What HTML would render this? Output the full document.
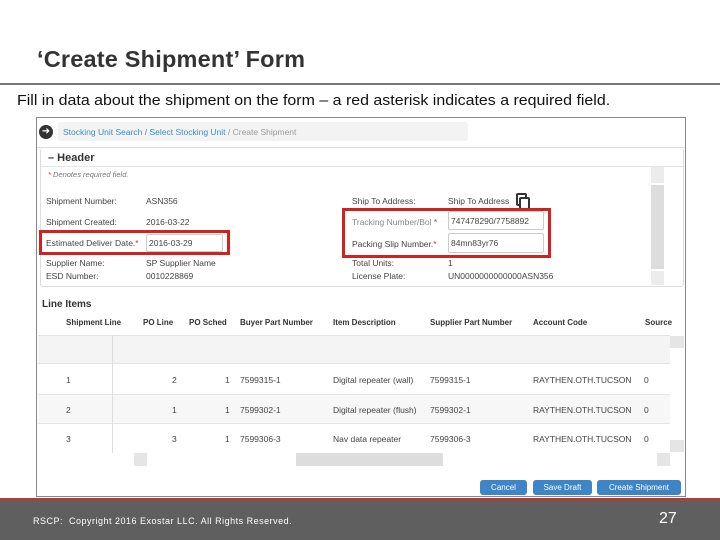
<!DOCTYPE html>
<html><head><meta charset="utf-8"><style>
*{margin:0;padding:0;box-sizing:border-box}
body{width:720px;height:540px;background:#fff;position:relative;overflow:hidden;font-family:"Liberation Sans",Arial,sans-serif}
.a{position:absolute;white-space:nowrap}
.s{font-size:8.5px;color:#444}
.h{font-size:8px;color:#333;font-weight:bold}
.btn{position:absolute;top:480px;height:15px;background:#3d85c6;color:#fff;font-size:8px;text-align:center;line-height:15px;border-radius:3px}
.g{position:absolute;background:#ddd}
</style></head><body>
<div class="a" style="left:37px;top:46px;font-size:23.5px;font-weight:bold;color:#333;letter-spacing:0.2px">‘Create Shipment’ Form</div>
<div class="a" style="left:0;top:83px;width:720px;height:2px;background:#777"></div>
<div class="a" style="left:17px;top:93px;font-size:14.5px;color:#111;transform:scaleX(1.1);transform-origin:left">Fill in data about the shipment on the form – a red asterisk indicates a required field.</div>

<div class="a" style="left:36px;top:117px;width:650px;height:380px;border:1px solid #888"></div>
<div class="a" style="left:58px;top:122px;width:410px;height:19px;background:#f3f3f3;border-radius:3px"></div>
<div class="a" style="left:39px;top:125px;width:14px;height:14px;border-radius:50%;background:#333;color:#fff;font-size:10px;line-height:14px;text-align:center">➜</div>
<div class="a" style="left:63px;top:127px;font-size:8.5px;color:#3a8fc0">Stocking Unit Search / Select Stocking Unit <span style="color:#999">/ Create Shipment</span></div>
<div class="a" style="left:37px;top:147px;width:648px;height:1px;background:#ddd"></div>
<div class="a" style="left:40px;top:148px;width:644px;height:139px;border:1px solid #ddd;border-top:none;border-radius:3px"></div>
<div class="a" style="left:48px;top:152px;font-size:11px;font-weight:bold;color:#333">– Header</div>
<div class="a" style="left:41px;top:166px;width:642px;height:1px;background:#e5e5e5"></div>
<div class="a" style="left:48px;top:170px;font-size:7.5px;font-style:italic;color:#777"><span style="color:#c33">*</span> Denotes required field.</div>

<div class="a s" style="left:46px;top:196px">Shipment Number:</div><div class="a s" style="left:146px;top:196px">ASN356</div>
<div class="a s" style="left:46px;top:217px">Shipment Created:</div><div class="a s" style="left:146px;top:217px">2016-03-22</div>
<div class="a s" style="left:46px;top:238px">Estimated Deliver Date.<span style="color:#c33">*</span></div>
<div class="a" style="left:146px;top:234px;width:77px;height:18px;border:1px solid #ccc;border-radius:2px;font-size:8.5px;color:#444;padding:3px 2px">2016-03-29</div>
<div class="a s" style="left:46px;top:258px">Supplier Name:</div><div class="a s" style="left:146px;top:258px">SP Supplier Name</div>
<div class="a s" style="left:46px;top:271px">ESD Number:</div><div class="a s" style="left:146px;top:271px">0010228869</div>

<div class="a s" style="left:352px;top:196px">Ship To Address:</div><div class="a s" style="left:448px;top:196px">Ship To Address</div>
<div class="a" style="left:516px;top:193px;width:11px;height:13px;border:2px solid #333;border-radius:2px"></div>
<div class="a" style="left:519px;top:197px;width:11px;height:13px;border:2px solid #333;border-radius:2px;background:#fff"></div>
<div class="a s" style="left:352px;top:217px;color:#888">Tracking Number/Bol <span style="color:#c33">*</span></div>
<div class="a" style="left:448px;top:211px;width:96px;height:19px;border:1px solid #ccc;border-radius:2px;font-size:8.5px;color:#444;padding:4px 2px">747478290/7758892</div>
<div class="a s" style="left:352px;top:239px">Packing Slip Number.<span style="color:#c33">*</span></div>
<div class="a" style="left:448px;top:233px;width:96px;height:20px;border:1px solid #ccc;border-radius:2px;font-size:8.5px;color:#444;padding:4px 2px">84mn83yr76</div>
<div class="a s" style="left:352px;top:258px">Total Units:</div><div class="a s" style="left:448px;top:258px">1</div>
<div class="a s" style="left:352px;top:271px">License Plate:</div><div class="a s" style="left:448px;top:271px">UN0000000000000ASN356</div>

<div class="a" style="left:651px;top:167px;width:13px;height:16px;background:#ececec"></div>
<div class="g" style="left:651px;top:185px;width:13px;height:84px"></div>
<div class="a" style="left:651px;top:271px;width:13px;height:14px;background:#ececec"></div>

<div class="a" style="left:39px;top:230px;width:191px;height:25px;border:3px solid #d0231f"></div>
<div class="a" style="left:342px;top:208px;width:209px;height:50px;border:3px solid #d0231f"></div>

<div class="a" style="left:42px;top:299px;font-size:10px;font-weight:bold;color:#333">Line Items</div>
<div class="a h" style="left:66px;top:318px">Shipment Line</div>
<div class="a h" style="left:143px;top:318px">PO Line</div>
<div class="a h" style="left:189px;top:318px">PO Sched</div>
<div class="a h" style="left:240px;top:318px">Buyer Part Number</div>
<div class="a h" style="left:333px;top:318px">Item Description</div>
<div class="a h" style="left:430px;top:318px">Supplier Part Number</div>
<div class="a h" style="left:533px;top:318px">Account Code</div>
<div class="a h" style="left:645px;top:318px">Source</div>
<div class="a" style="left:38px;top:335px;width:632px;height:29px;background:#f4f4f4;border-top:1px solid #e3e3e3;border-bottom:1px solid #e3e3e3"></div>
<div class="a" style="left:38px;top:394px;width:632px;height:30px;background:#f7f7f7;border-top:1px solid #e5e5e5;border-bottom:1px solid #e5e5e5"></div>
<div class="a" style="left:112px;top:335px;width:1px;height:118px;background:#ddd"></div>
<div class="a" style="left:670px;top:336px;width:14px;height:12px;background:#e5e5e5"></div>
<div class="a" style="left:670px;top:440px;width:14px;height:12px;background:#e5e5e5"></div>

<div class="a s" style="left:66px;top:375px">1</div><div class="a s" style="left:172px;top:375px">2</div><div class="a s" style="left:225px;top:375px">1</div><div class="a s" style="left:240px;top:375px">7599315-1</div><div class="a s" style="left:333px;top:375px">Digital repeater (wall)</div><div class="a s" style="left:430px;top:375px">7599315-1</div><div class="a s" style="left:533px;top:375px">RAYTHEN.OTH.TUCSON</div><div class="a s" style="left:644px;top:375px">0</div>
<div class="a s" style="left:66px;top:405px">2</div><div class="a s" style="left:172px;top:405px">1</div><div class="a s" style="left:225px;top:405px">1</div><div class="a s" style="left:240px;top:405px">7599302-1</div><div class="a s" style="left:333px;top:405px">Digital repeater (flush)</div><div class="a s" style="left:430px;top:405px">7599302-1</div><div class="a s" style="left:533px;top:405px">RAYTHEN.OTH.TUCSON</div><div class="a s" style="left:644px;top:405px">0</div>
<div class="a s" style="left:66px;top:434px">3</div><div class="a s" style="left:172px;top:434px">3</div><div class="a s" style="left:225px;top:434px">1</div><div class="a s" style="left:240px;top:434px">7599306-3</div><div class="a s" style="left:333px;top:434px">Nav data repeater</div><div class="a s" style="left:430px;top:434px">7599306-3</div><div class="a s" style="left:533px;top:434px">RAYTHEN.OTH.TUCSON</div><div class="a s" style="left:644px;top:434px">0</div>

<div class="a" style="left:134px;top:453px;width:13px;height:13px;background:#e5e5e5"></div>
<div class="g" style="left:296px;top:453px;width:147px;height:13px"></div>
<div class="a" style="left:657px;top:453px;width:13px;height:13px;background:#e5e5e5"></div>

<div class="btn" style="left:480px;width:47px">Cancel</div>
<div class="btn" style="left:533px;width:59px">Save Draft</div>
<div class="btn" style="left:597px;width:84px">Create Shipment</div>

<div class="a" style="left:0;top:498px;width:720px;height:3px;background:#a8403a"></div>
<div class="a" style="left:0;top:501px;width:720px;height:39px;background:#5f5f5f"></div>
<div class="a" style="left:33px;top:516px;font-size:9px;color:#fff;letter-spacing:0.5px">RSCP:&nbsp; Copyright 2016 Exostar LLC. All Rights Reserved.</div>
<div class="a" style="left:659px;top:510px;font-size:16px;color:#fff">27</div>
</body></html>
